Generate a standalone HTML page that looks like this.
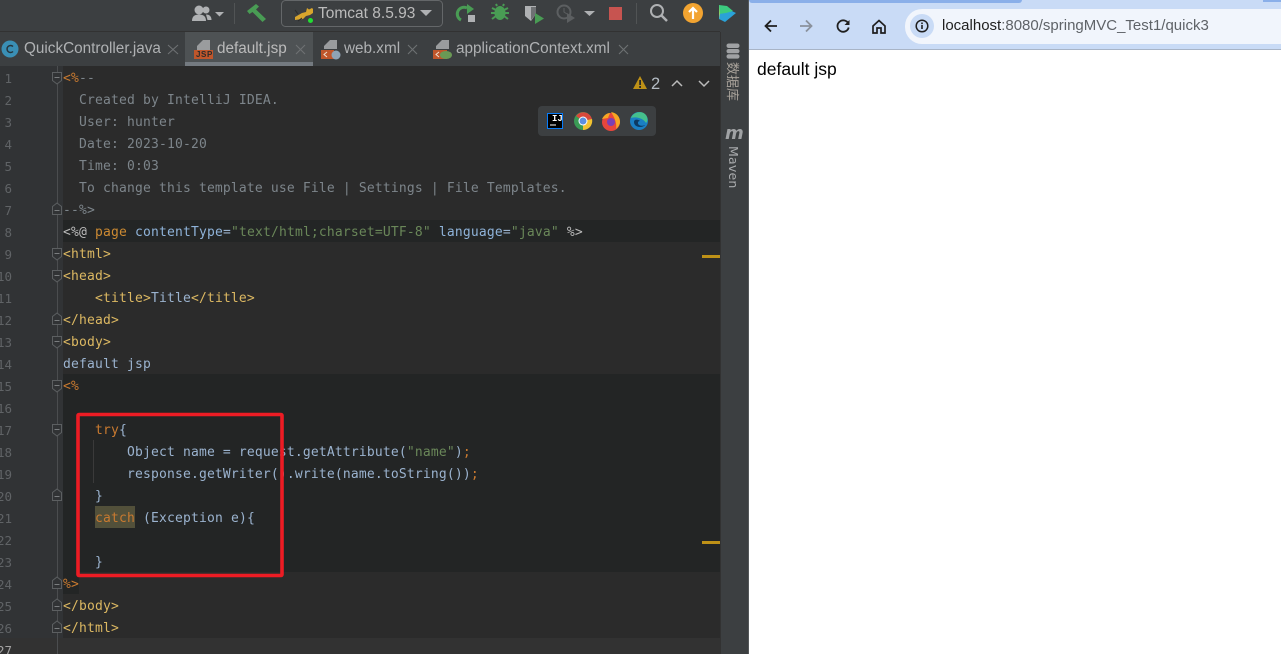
<!DOCTYPE html>
<html><head><meta charset="utf-8">
<style>
html,body{margin:0;padding:0;width:1281px;height:654px;overflow:hidden;background:#fff}
.a{position:absolute}
#ide{position:absolute;left:0;top:0;width:749px;height:654px;background:#2b2b2b;overflow:hidden}
.code{position:absolute;left:63px;margin-top:2px;height:22px;font:13px/22px "DejaVu Sans Mono","Liberation Mono",monospace;letter-spacing:.17px;white-space:pre;color:#9bb3cf}
.n{position:absolute;left:0;margin-top:2px;width:12px;text-align:right;font:12.5px/22px "DejaVu Sans Mono",monospace;color:#606366;white-space:pre;direction:rtl}
.t{color:#dcb862}.c{color:#7d858b}.o{color:#c97a30}.g{color:#6a8759}.b{color:#8fb3d9}
.ui{font-family:"Liberation Sans",sans-serif;font-size:15.300px;color:#afb1b3;white-space:pre;line-height:18px}
</style></head><body>
<div id="ide">
<div class="a" style="left:0;top:0;width:749px;height:32px;background:#3c3f41"></div>
<div class="a" style="left:0;top:32px;width:720px;height:34px;background:#3c3f41"></div>
<div class="a" style="left:0;top:31px;width:720px;height:1px;background:#323232"></div>
<div class="a" style="left:185px;top:32px;width:128px;height:34px;background:#4e5254"></div>
<div class="a" style="left:185px;top:62px;width:128px;height:4px;background:#747a80"></div>
<div class="a" style="left:0;top:66px;width:63px;height:588px;background:#313335"></div>
<div class="a" style="left:63px;top:220px;width:657px;height:22px;background:#232525"></div>
<div class="a" style="left:63px;top:374px;width:657px;height:198px;background:#232525"></div>
<div class="a" style="left:63px;top:572px;width:16px;height:22px;background:#232525"></div>
<div class="a" style="left:0;top:638px;width:720px;height:16px;background:#323232"></div>
<div class="a" style="left:95px;top:506px;width:40px;height:22px;background:#52503a"></div>
<div class="a" style="left:93px;top:440px;width:1px;height:43px;background:#3a3a3a"></div>
<div class="a" style="left:702px;top:255px;width:18px;height:3px;background:#be9117"></div>
<div class="a" style="left:702px;top:541px;width:18px;height:3px;background:#be9117"></div>
<div class="a" style="left:720px;top:32px;width:28px;height:622px;background:#3c3f41;border-left:1px solid #323232;box-sizing:border-box"></div>
<div class="a" style="left:748px;top:0;width:1px;height:654px;background:#55585a"></div>
<div class="a" style="left:57px;top:66px;width:1px;height:588px;background:#4b4d4f"></div>

<svg class="a" style="left:0;top:0" width="749" height="654">
<defs>
<g id="fo"><path d="M52.500 -4.500H61.500V3.500L57 7 52.500 3.500Z" fill="#313335" stroke="#5c5f61"/><path d="M54.500 .5h5" stroke="#7a7d7f"/></g>
<g id="fc"><path d="M52.500 5.500H61.500V-2.500L57 -6 52.500 -2.500Z" fill="#313335" stroke="#5c5f61"/><path d="M54.500 1.500h5" stroke="#7a7d7f"/></g>
</defs>
<g fill="#afb1b3">
<circle cx="199" cy="10" r="4.500"/><path d="M192 21c0-5 3-6.500 7-6.500s7 1.500 7 6.500z"/><circle cx="206" cy="10" r="3.500"/><path d="M206 14.500c3 0 5.500 1.500 5.500 5.500h-4z"/>
<path d="M215 12h9l-4.500 4.500z"/></g>
<rect x="234" y="3" width="1" height="21" fill="#515455"/>
<path d="M247 11l9-7 3 2.500-3 3 10 9.500-3.500 3-10-10-3 2z" fill="#499c54"/>
<rect x="281.500" y="0.500" width="161" height="26" rx="4" fill="none" stroke="#646769"/>
<path d="M295 17l7-4 4-1 1-4 2 1.500 3-1.500 1 1 0 4-3 2-4 1-3 3-8 1z" fill="#d8a52d"/><path d="M295 10l3 4M298 21l4-3" stroke="#2a2a2a"/><circle cx="310.500" cy="20.500" r="2.500" fill="#22dd33"/>
<path d="M420 10h12l-6 6z" fill="#afb1b3"/>
<path d="M467 8A6.500 6.500 0 1 0 461 20" fill="none" stroke="#499c54" stroke-width="3"/>
<path d="M467 4l7 5-7 5z" fill="#499c54"/><rect x="468" y="15" width="7" height="7" fill="#afb1b3"/>
<ellipse cx="500" cy="13" rx="5.500" ry="7" fill="#499c54"/><path d="M492 8l4 2M508 8l-4 2M491 13h4M505 13h4M492 19l4-3M508 19l-4-3M497 6l-1-2M503 6l1-2" stroke="#499c54" stroke-width="2"/>
<path d="M525 6h11v8l-5 7-6-5z" fill="#afb1b3"/><path d="M531 7h5v7l-5 6z" fill="#6e7173"/><path d="M535 13l9 5.500-9 5.500z" fill="#499c54"/>
<circle cx="564" cy="12" r="6.500" fill="none" stroke="#5c5f61" stroke-width="2"/><path d="M564 8v4l3 2" stroke="#5c5f61" fill="none"/><path d="M567 13l8 5-8 5z" fill="#5c5f61"/>
<path d="M584 11h11l-5.500 5z" fill="#afb1b3"/>
<rect x="609" y="7" width="13" height="13" fill="#c75450"/>
<rect x="636" y="3" width="1" height="21" fill="#515455"/>
<circle cx="657" cy="11" r="6" fill="none" stroke="#afb1b3" stroke-width="2"/><path d="M661 15l6 6" stroke="#afb1b3" stroke-width="2.500"/>
<circle cx="693" cy="13" r="10" fill="#f2a431"/><path d="M693 19v-10M689 12l4-4 4 4" stroke="#fff" stroke-width="2.200" fill="none"/>
<path d="M719 5l17 8-11 9-6-3z" fill="#2aa2d8"/><path d="M719 5l8 1 6 5-7 2-7 1z" fill="#3ccb7f"/><path d="M719 5v9l1 5z" fill="#c8dc50"/>

<circle cx="10" cy="49" r="8.500" fill="#3a8fb5"/><path d="M13 46.500a3.500 3.500 0 1 0 0 5" fill="none" stroke="#26353d" stroke-width="1.500"/>
<path d="M197 46l6-6h7v10h-13z" fill="#9a9c9e"/><rect x="194" y="50" width="19" height="9" fill="#c0562b"/>
<path d="M324 46l6-6h7v9h-13z" fill="#9a9c9e"/><rect x="321" y="50" width="13" height="9" fill="#c0562b"/><path d="M327 52l-3 2.500 3 2.500" stroke="#f0e0d0" fill="none"/><circle cx="336" cy="55" r="4.500" fill="#8fa3b5"/>
<path d="M436 46l6-6h7v9h-13z" fill="#9a9c9e"/><rect x="433" y="50" width="14" height="9" fill="#c0562b"/><path d="M439 52l-3 2.500 3 2.500" stroke="#f0e0d0" fill="none"/><ellipse cx="446" cy="55" rx="6" ry="4" fill="#6a9955"/>
<path d="M168 45l10 9M178 45l-10 9M296 45l9 9M305 45l-9 9M408 45l9 9M417 45l-9 9M619 45l9 9M628 45l-9 9" stroke="#6e7173" stroke-width="1.100"/>

<path d="M633 89l7-13 7 13z" fill="#be9117"/><rect x="639.200" y="80" width="1.800" height="5" fill="#2b2b2b"/><rect x="639.200" y="86" width="1.800" height="2" fill="#2b2b2b"/>
<path d="M672 86l5-5 5 5M699 81l5 5 5-5" fill="none" stroke="#bbbbbb" stroke-width="1.500"/>
<rect x="538" y="106" width="118" height="30" rx="4" fill="#3c3f41"/>
<rect x="547.500" y="113.500" width="15" height="15" fill="#000" stroke="#087cfa" stroke-width="1"/><path d="M550 125h6" stroke="#fff"/>
<circle cx="583" cy="121" r="9" fill="#3a9a55"/><path d="M583 121l9-2a9 9 0 0 0-16-3z" fill="#d8483c"/><path d="M583 121l9-2a9 9 0 0 1-9 11z" fill="#f2c230"/><circle cx="583" cy="121" r="4.500" fill="#fff"/><circle cx="583" cy="121" r="3.500" fill="#5b8fe0"/>
<circle cx="611" cy="122" r="9" fill="#e8463c"/><path d="M611 112c6 1 9 5 9 10 0 3-2 5-4 7 1-5-1-11-5-17z" fill="#f6a623"/><path d="M602 119c2-4 5-6 8-6l-2 5z" fill="#f6a623"/><circle cx="611" cy="122" r="4" fill="#7b3fb5"/>
<circle cx="639" cy="121" r="9" fill="#1a7fc4"/><path d="M631 118c2-6 11-8 15-3 2 3 2 6 0 8-2-4-9-7-15-5z" fill="#45c08c"/><path d="M634 122c0-3 4-3 6-1-2 0-3 2-1 4 2 1 4 1 6 0-2 3-11 3-11-3z" fill="#0c3a63"/>

<rect x="726.500" y="43.500" width="13" height="4.500" rx="2.200" fill="#a0a2a4"/><rect x="726.500" y="49" width="13" height="4.300" rx="2.100" fill="#a0a2a4"/><rect x="726.500" y="54.300" width="13" height="4.300" rx="2.100" fill="#a0a2a4"/>
<use href="#fo" y="77"/><use href="#fc" y="209"/><use href="#fo" y="253"/><use href="#fo" y="275"/><use href="#fc" y="319"/><use href="#fo" y="341"/><use href="#fo" y="385"/><use href="#fo" y="429"/><use href="#fc" y="495"/><use href="#fc" y="583"/><use href="#fc" y="605"/><use href="#fc" y="627"/>
</svg>

<div class="a ui" style="left:318px;top:5px;font-size:15.500px;color:#bbb">Tomcat 8.5.93</div>
<div class="a ui" style="left:24px;top:40px">QuickController.java</div>
<div class="a ui" style="left:217px;top:40px;color:#bbb">default.jsp</div>
<div class="a" style="left:196px;top:51px;font:bold 8px/8px 'Liberation Sans',sans-serif;letter-spacing:.6px;color:#2b2b2b">JSP</div>
<div class="a ui" style="left:344px;top:40px">web.xml</div>
<div class="a ui" style="left:456px;top:40px">applicationContext.xml</div>
<div class="a ui" style="left:651px;top:75px;font-size:16.500px;color:#b4bcc4">2</div>
<div class="a" style="left:552px;top:115px;font:bold 9px/9px 'Liberation Mono',monospace;color:#fff">IJ</div>
<div class="a" style="left:741px;top:62px;transform-origin:0 0;transform:rotate(90deg);font:13px/15px 'Noto Sans CJK SC',sans-serif;color:#a8a29a;white-space:pre">数据库</div>
<div class="a" style="left:725px;top:125px;font:italic bold 18px/18px 'DejaVu Sans',sans-serif;color:#a0a2a4">m</div>
<div class="a" style="left:740px;top:146px;transform-origin:0 0;transform:rotate(90deg);font:12.500px/14px 'DejaVu Sans',sans-serif;letter-spacing:.2px;color:#a8aaac">Maven</div>

<div class="n" style="top:66px">1</div><div class="n" style="top:88px">2</div><div class="n" style="top:110px">3</div><div class="n" style="top:132px">4</div><div class="n" style="top:154px">5</div><div class="n" style="top:176px">6</div><div class="n" style="top:198px">7</div><div class="n" style="top:220px">8</div><div class="n" style="top:242px">9</div>
<div class="n" style="top:264px">10</div><div class="n" style="top:286px">11</div><div class="n" style="top:308px">12</div><div class="n" style="top:330px">13</div><div class="n" style="top:352px">14</div><div class="n" style="top:374px">15</div><div class="n" style="top:396px">16</div><div class="n" style="top:418px">17</div><div class="n" style="top:440px">18</div><div class="n" style="top:462px">19</div><div class="n" style="top:484px">20</div><div class="n" style="top:506px">21</div><div class="n" style="top:528px">22</div><div class="n" style="top:550px">23</div><div class="n" style="top:572px">24</div><div class="n" style="top:594px">25</div><div class="n" style="top:616px">26</div><div class="n" style="top:638px;color:#a4a3a3">27</div>

<div class="code c" style="top:66px"><span class="o">&lt;%</span>--</div>
<div class="code c" style="top:88px">  Created by IntelliJ IDEA.</div>
<div class="code c" style="top:110px">  User: hunter</div>
<div class="code c" style="top:132px">  Date: 2023-10-20</div>
<div class="code c" style="top:154px">  Time: 0:03</div>
<div class="code c" style="top:176px">  To change this template use File | Settings | File Templates.</div>
<div class="code c" style="top:198px">--%&gt;</div>
<div class="code" style="top:220px"><span style="color:#bbb">&lt;%@</span> <span style="color:#cc8a32">page</span> <span class="b">contentType</span>=<span class="g">"text/html;charset=UTF-8"</span> <span class="b">language</span>=<span class="g">"java"</span> <span style="color:#bbb">%&gt;</span></div>
<div class="code t" style="top:242px">&lt;html&gt;</div>
<div class="code t" style="top:264px">&lt;head&gt;</div>
<div class="code t" style="top:286px">    &lt;title&gt;<span style="color:#9bb3cf">Title</span>&lt;/title&gt;</div>
<div class="code t" style="top:308px">&lt;/head&gt;</div>
<div class="code t" style="top:330px">&lt;body&gt;</div>
<div class="code" style="top:352px">default jsp</div>
<div class="code o" style="top:374px">&lt;%</div>
<div class="code" style="top:418px">    <span class="o">try</span>{</div>
<div class="code" style="top:440px">        Object name = request.getAttribute(<span class="g">"name"</span>)<span class="o">;</span></div>
<div class="code" style="top:462px">        response.getWriter().write(name.toString())<span class="o">;</span></div>
<div class="code" style="top:484px">    }</div>
<div class="code" style="top:506px">    <span class="o">catch</span> (Exception e){</div>
<div class="code" style="top:550px">    }</div>
<div class="code o" style="top:572px">%&gt;</div>
<div class="code t" style="top:594px">&lt;/body&gt;</div>
<div class="code t" style="top:616px">&lt;/html&gt;</div>
<svg class="a" style="left:0;top:0" width="300" height="654"><rect x="78" y="414.500" width="204" height="161" fill="none" stroke="#ed1c24" stroke-width="3.600" rx="1"/></svg>
</div>

<div class="a" style="left:749px;top:0;width:532px;height:50px;background:#c9dbf6;border-bottom:1px solid #a8b4c6;box-sizing:border-box"></div>
<div class="a" style="left:749px;top:0;width:273px;height:3px;background:#8aafe9;border-radius:0 0 6px 6px"></div>
<div class="a" style="left:1263px;top:0;width:18px;height:2px;background:#8aafe9"></div>
<div class="a" style="left:905px;top:9px;width:376px;height:35px;background:#f1f5fc;border-radius:17px 0 0 17px"></div>
<div class="a" style="left:910px;top:14px;width:24px;height:24px;background:#c9dbf6;border-radius:50%"></div>
<svg class="a" style="left:748px;top:0" width="200" height="50">
<path d="M29 26h-11M23 20.500l-5.500 5.500 5.500 5.500" fill="none" stroke="#1f1f1f" stroke-width="1.800"/>
<path d="M52 26h11M58 20.500l5.500 5.500-5.500 5.500" fill="none" stroke="#8a919c" stroke-width="1.800"/>
<path d="M100.500 24a5.700 5.700 0 1 0 .2 3.500" fill="none" stroke="#1f1f1f" stroke-width="1.800"/><path d="M101.500 20v5h-5z" fill="#1f1f1f"/>
<path d="M125 26l6-5.500 6 5.500v7h-4v-5h-4v5h-4z" fill="none" stroke="#1f1f1f" stroke-width="1.700"/>
<circle cx="174" cy="26" r="5.800" fill="none" stroke="#1f1f1f" stroke-width="1.500"/><rect x="173.200" y="25" width="1.600" height="4" fill="#1f1f1f"/><rect x="173.200" y="22.500" width="1.600" height="1.600" fill="#1f1f1f"/>
</svg>
<div class="a" style="left:942px;top:17px;font:15px/18px 'Liberation Sans',sans-serif;color:#5f6368;white-space:pre"><span style="color:#1f1f1f">localhost</span>:8080/springMVC_Test1/quick3</div>
<div class="a" style="left:757px;top:59px;font:17.500px/20px 'Liberation Sans',sans-serif;color:#000">default jsp</div>
</body></html>
